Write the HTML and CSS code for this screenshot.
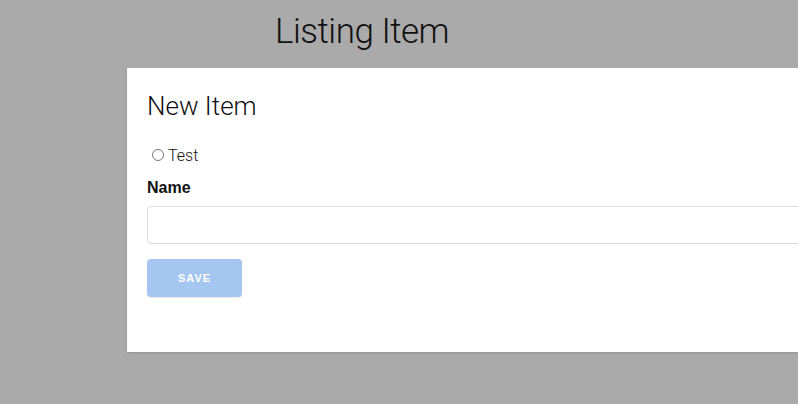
FILE: index.html
```html
<!DOCTYPE html>
<html>
<head>
<meta charset="utf-8">
<link rel="stylesheet" href="styles.css">
</head>
<body>
<header class="page-header">
  <h1 class="page-title">Listing Item</h1>
</header>
<main class="card">
  <h2 class="card-title">New Item</h2>
  <label class="radio-row">
    <input type="radio" class="radio" name="opt">
    <span class="radio-label">Test</span>
  </label>
  <label class="field-label" for="name">Name</label>
  <input id="name" class="text-input" type="text">
  <button class="save-btn" type="button">SAVE</button>
</main>
</body>
</html>
```
FILE: styles.css
```css
html, body {
  margin: 0;
  padding: 0;
  overflow: hidden;
}
body {
  background: #aaaaaa;
  font-family: Roboto, "Liberation Sans", sans-serif;
  color: #111;
  width: 798px;
  height: 404px;
}
.page-header {
  height: 68px;
  padding-left: 275px;
  box-sizing: border-box;
}
.page-title {
  margin: 0;
  padding-top: 10px;
  font-size: 35px;
  font-weight: 300;
  line-height: 44px;
  letter-spacing: -0.5px;
}
.card {
  margin-left: 127px;
  width: 720px;
  height: 284px;
  box-sizing: border-box;
  background: #fff;
  padding: 22px 20px 0;
  box-shadow: 0 1px 2px rgba(0,0,0,0.15);
  display: flex;
  flex-direction: column;
  align-items: flex-start;
}
.card-title {
  margin: 0;
  font-size: 26px;
  font-weight: 300;
  line-height: 32px;
}
.radio-row {
  display: flex;
  align-items: center;
  margin-top: 23px;
  height: 20px;
}
.radio {
  width: 12px;
  height: 12px;
  margin: 0 4px 0 5px;
  appearance: none;
  border: 1px solid #777;
  border-radius: 50%;
  box-sizing: border-box;
  background: #fff;
}
.radio-label {
  font-size: 16px;
  font-weight: 300;
}
.field-label {
  margin-top: 13px;
  font-size: 16px;
  font-weight: 700;
  line-height: 20px;
  font-family: "Liberation Sans", Arial, sans-serif;
}
.text-input {
  margin-top: 8px;
  width: 100%;
  height: 38px;
  box-sizing: border-box;
  border: 1px solid #dcdcdc;
  border-radius: 4px;
  background: #fff;
}
.save-btn {
  margin-top: 15px;
  width: 95px;
  height: 38px;
  border: none;
  border-radius: 4px;
  background: #a4c6f0;
  color: #fff;
  font-family: "Liberation Sans", Arial, sans-serif;
  font-weight: 700;
  font-size: 11px;
  letter-spacing: 1px;
  box-shadow: 0 1px 1px rgba(0,0,0,0.08);
}
```
